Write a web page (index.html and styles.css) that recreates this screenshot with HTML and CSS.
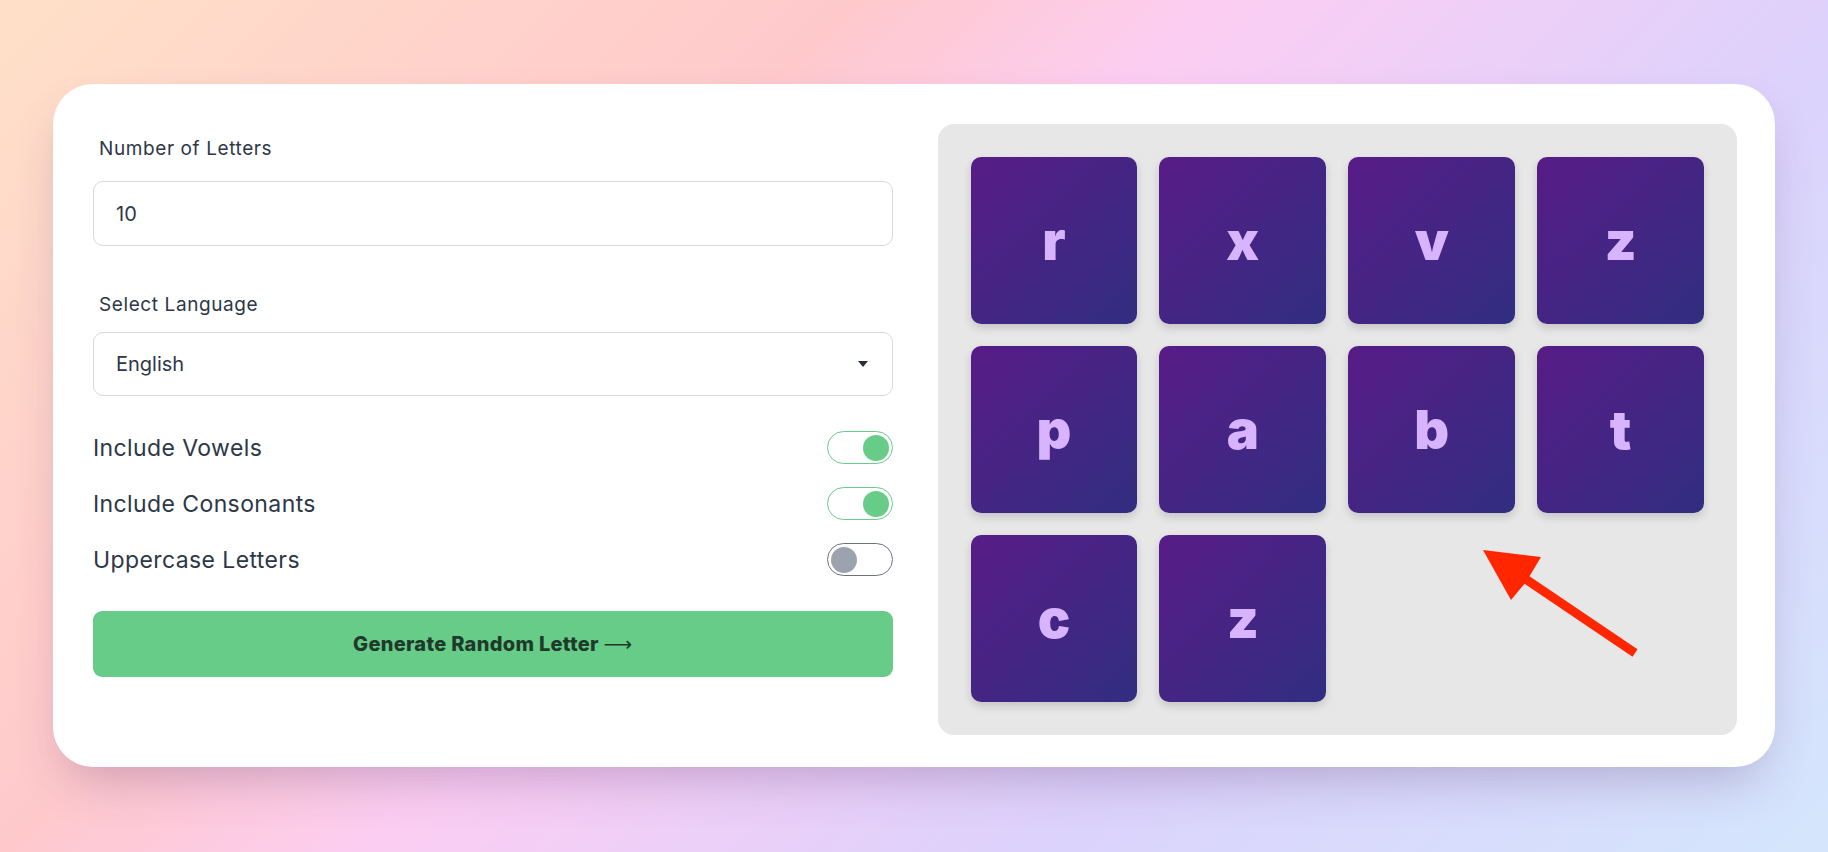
FILE: index.html
```html
<!DOCTYPE html>
<html lang="en">
<head>
  <meta charset="UTF-8">
  <meta name="viewport" content="width=device-width, initial-scale=1.0">
  <title>Random Letter Generator</title>
  <link rel="stylesheet" href="styles.css">
</head>
<body>
  <main class="card">
    <section class="controls">
      <label class="field-label" for="count">Number of Letters</label>
      <input class="text-input" id="count" type="number" value="10">

      <label class="field-label field-label-second" for="language">Select Language</label>
      <div class="select-wrap">
        <select class="select-input" id="language">
          <option>English</option>
          <option>Spanish</option>
          <option>French</option>
        </select>
      </div>

      <div class="option-list">
        <div class="option-row">
          <span>Include Vowels</span>
          <span class="toggle toggle-on"><span class="knob"></span></span>
        </div>
        <div class="option-row">
          <span>Include Consonants</span>
          <span class="toggle toggle-on"><span class="knob"></span></span>
        </div>
        <div class="option-row">
          <span>Uppercase Letters</span>
          <span class="toggle"><span class="knob"></span></span>
        </div>
      </div>

      <button class="btn-generate">Generate Random Letter <span class="arrow">&#x27F6;</span></button>
    </section>

    <section class="letters-panel">
      <div class="letter-tile">r</div>
      <div class="letter-tile">x</div>
      <div class="letter-tile">v</div>
      <div class="letter-tile">z</div>
      <div class="letter-tile">p</div>
      <div class="letter-tile">a</div>
      <div class="letter-tile">b</div>
      <div class="letter-tile">t</div>
      <div class="letter-tile">c</div>
      <div class="letter-tile">z</div>
    </section>
  </main>

  <!-- annotation arrow drawn on top of the screenshot -->
  <svg class="annotation" width="1828" height="852" viewBox="0 0 1828 852">
    <polygon fill="#ff2600" points="1483,550 1541,557 1529.5,576.3 1637.5,649.3 1632.5,656.7 1524.5,583.7 1511,600"/>
  </svg>
</body>
</html>
```

FILE: styles.css
```css
:root {
  --text-color: #2d3748;
  --green: #66cc88;
  --panel-bg: #e7e7e7;
  --letter-color: #d8b4fe;
}

* {
  box-sizing: border-box;
}

body {
  margin: 0;
  min-height: 100vh;
  padding: 84px 53px;
  font-family: 'Inter', 'Roboto', sans-serif;
  color: var(--text-color);
  background: linear-gradient(135deg, #ffe0c8 0%, #ffc9cc 32%, #fbcdf3 46%, #dcd2fc 70%, #d4e6fc 100%);
  position: relative;
}

.card {
  display: grid;
  grid-template-columns: 1fr 1fr;
  column-gap: 45px;
  padding: 40px 38px 32px 40px;
  background-color: #fff;
  border-radius: 40px;
  box-shadow: 0 24px 50px -14px rgba(90, 50, 110, 0.3);
}

.controls {
  display: flex;
  flex-direction: column;
}

.field-label {
  margin-top: 12px;
  padding-left: 6px;
  font-size: 19px;
  line-height: 26px;
  letter-spacing: 0.6px;
}

.field-label-second {
  margin-top: 46px;
}

.text-input,
.select-input {
  width: 100%;
  height: 65px;
  margin-top: 19px;
  padding: 0 22px;
  border: 1.5px solid #d9d9dc;
  border-radius: 10px;
  background: #fff;
  font-family: inherit;
  font-size: 20px;
  color: var(--text-color);
  outline: none;
}

.select-wrap {
  position: relative;
  margin-top: 14px;
}

.select-input {
  height: 64px;
  margin-top: 0;
  appearance: none;
  -webkit-appearance: none;
}

.select-wrap::after {
  content: '';
  position: absolute;
  right: 25px;
  top: 29px;
  border-left: 5px solid transparent;
  border-right: 5px solid transparent;
  border-top: 6px solid #2a2f3a;
}

.option-list {
  display: flex;
  flex-direction: column;
  gap: 23px;
  margin-top: 35px;
}

.option-row {
  display: flex;
  justify-content: space-between;
  align-items: center;
  height: 33px;
  font-size: 23px;
  letter-spacing: 0.4px;
}

.toggle {
  display: flex;
  align-items: center;
  width: 66px;
  height: 33px;
  padding: 0 3px;
  border: 1.5px solid #6b7280;
  border-radius: 999px;
  background: #fff;
}

.toggle .knob {
  width: 26px;
  height: 26px;
  border-radius: 50%;
  background-color: #9ca3af;
}

.toggle-on {
  justify-content: flex-end;
  border-color: var(--green);
}

.toggle-on .knob {
  background-color: var(--green);
}

.btn-generate {
  height: 66px;
  margin-top: 35px;
  border: none;
  border-radius: 9px;
  background-color: var(--green);
  font-family: inherit;
  font-size: 20px;
  font-weight: 800;
  letter-spacing: 0.3px;
  color: #1f3a2b;
  cursor: pointer;
}

.btn-generate .arrow {
  font-family: 'DejaVu Sans', sans-serif;
  font-weight: normal;
}

.letters-panel {
  display: grid;
  grid-template-columns: repeat(4, 1fr);
  gap: 22px;
  align-content: start;
  padding: 33px;
  background-color: var(--panel-bg);
  border-radius: 16px;
}

.letter-tile {
  aspect-ratio: 1 / 1;
  display: flex;
  justify-content: center;
  align-items: center;
  border-radius: 10px;
  background: linear-gradient(135deg, #581c87, #312e81);
  box-shadow: 0 4px 8px rgba(0, 0, 0, 0.15);
  font-size: 54px;
  font-weight: 900;
  color: var(--letter-color);
}

.annotation {
  position: absolute;
  left: 0;
  top: 0;
  pointer-events: none;
}
```
